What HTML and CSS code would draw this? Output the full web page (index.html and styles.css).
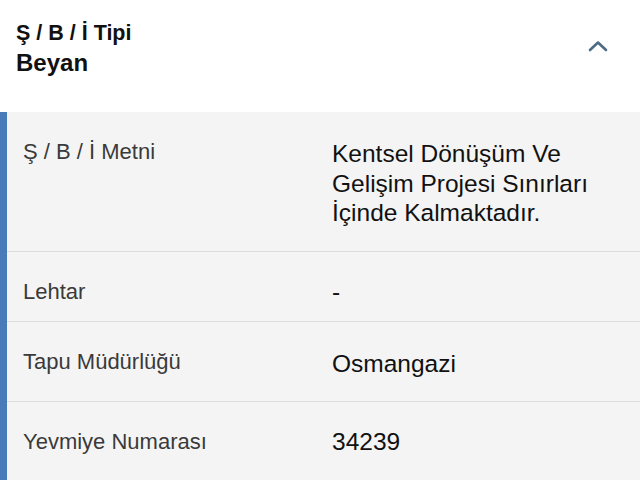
FILE: index.html
```html
<!DOCTYPE html>
<html lang="tr">
<head>
<meta charset="utf-8">
<link rel="stylesheet" href="styles.css">
</head>
<body>
<div class="panel">
  <header class="head">
    <div class="titles">
      <div class="kicker">Ş / B / İ Tipi</div>
      <div class="title">Beyan</div>
    </div>
    <svg class="chev" width="20" height="12" viewBox="0 0 20 12"><path d="M2 10 L10 2.5 L18 10" fill="none" stroke="#4d6b84" stroke-width="2.6" stroke-linecap="round" stroke-linejoin="round"/></svg>
  </header>
  <section class="body">
    <div class="row r1">
      <div class="label">Ş / B / İ Metni</div>
      <div class="value">Kentsel Dönüşüm Ve<br>Gelişim Projesi Sınırları<br>İçinde Kalmaktadır.</div>
    </div>
    <div class="row r2">
      <div class="label">Lehtar</div>
      <div class="value">-</div>
    </div>
    <div class="row r3">
      <div class="label">Tapu Müdürlüğü</div>
      <div class="value">Osmangazi</div>
    </div>
    <div class="row r4">
      <div class="label">Yevmiye Numarası</div>
      <div class="value">34239</div>
    </div>
  </section>
</div>
</body>
</html>
```
FILE: styles.css
```css
html, body {
  margin: 0;
  padding: 0;
  background: #ffffff;
  font-family: "Liberation Sans", Arial, sans-serif;
}
.panel {
  width: 640px;
  height: 480px;
  overflow: hidden;
}
.head {
  height: 112px;
  box-sizing: border-box;
  padding: 19px 32px 0 16px;
  display: flex;
  justify-content: space-between;
  align-items: flex-start;
  background: #fff;
}
.kicker {
  font-weight: bold;
  font-size: 21.5px;
  line-height: 29px;
  color: #111;
}
.title {
  font-weight: bold;
  font-size: 24px;
  line-height: 29px;
  color: #111;
}
.chev {
  margin-top: 21px;
}
.body {
  background: #f4f4f4;
  border-left: 7px solid #4a7bb9;
  height: 368px;
}
.row {
  display: grid;
  grid-template-columns: 309px 1fr;
  padding: 25px 16px 0 16px;
  box-sizing: border-box;
  border-bottom: 1.5px solid #dcdcdc;
}
.r1 { height: 140px; }
.r2 { height: 70px; }
.r3 { height: 80px; }
.r4 { height: 80px; border-bottom: none; }
.label {
  font-size: 22px;
  line-height: 30px;
  color: #3a3a3a;
}
.value {
  font-size: 24.5px;
  line-height: 29.5px;
  color: #111;
  margin-top: 2px;
}
.r2 .value, .r4 .value {
  margin-top: 0;
}
```
